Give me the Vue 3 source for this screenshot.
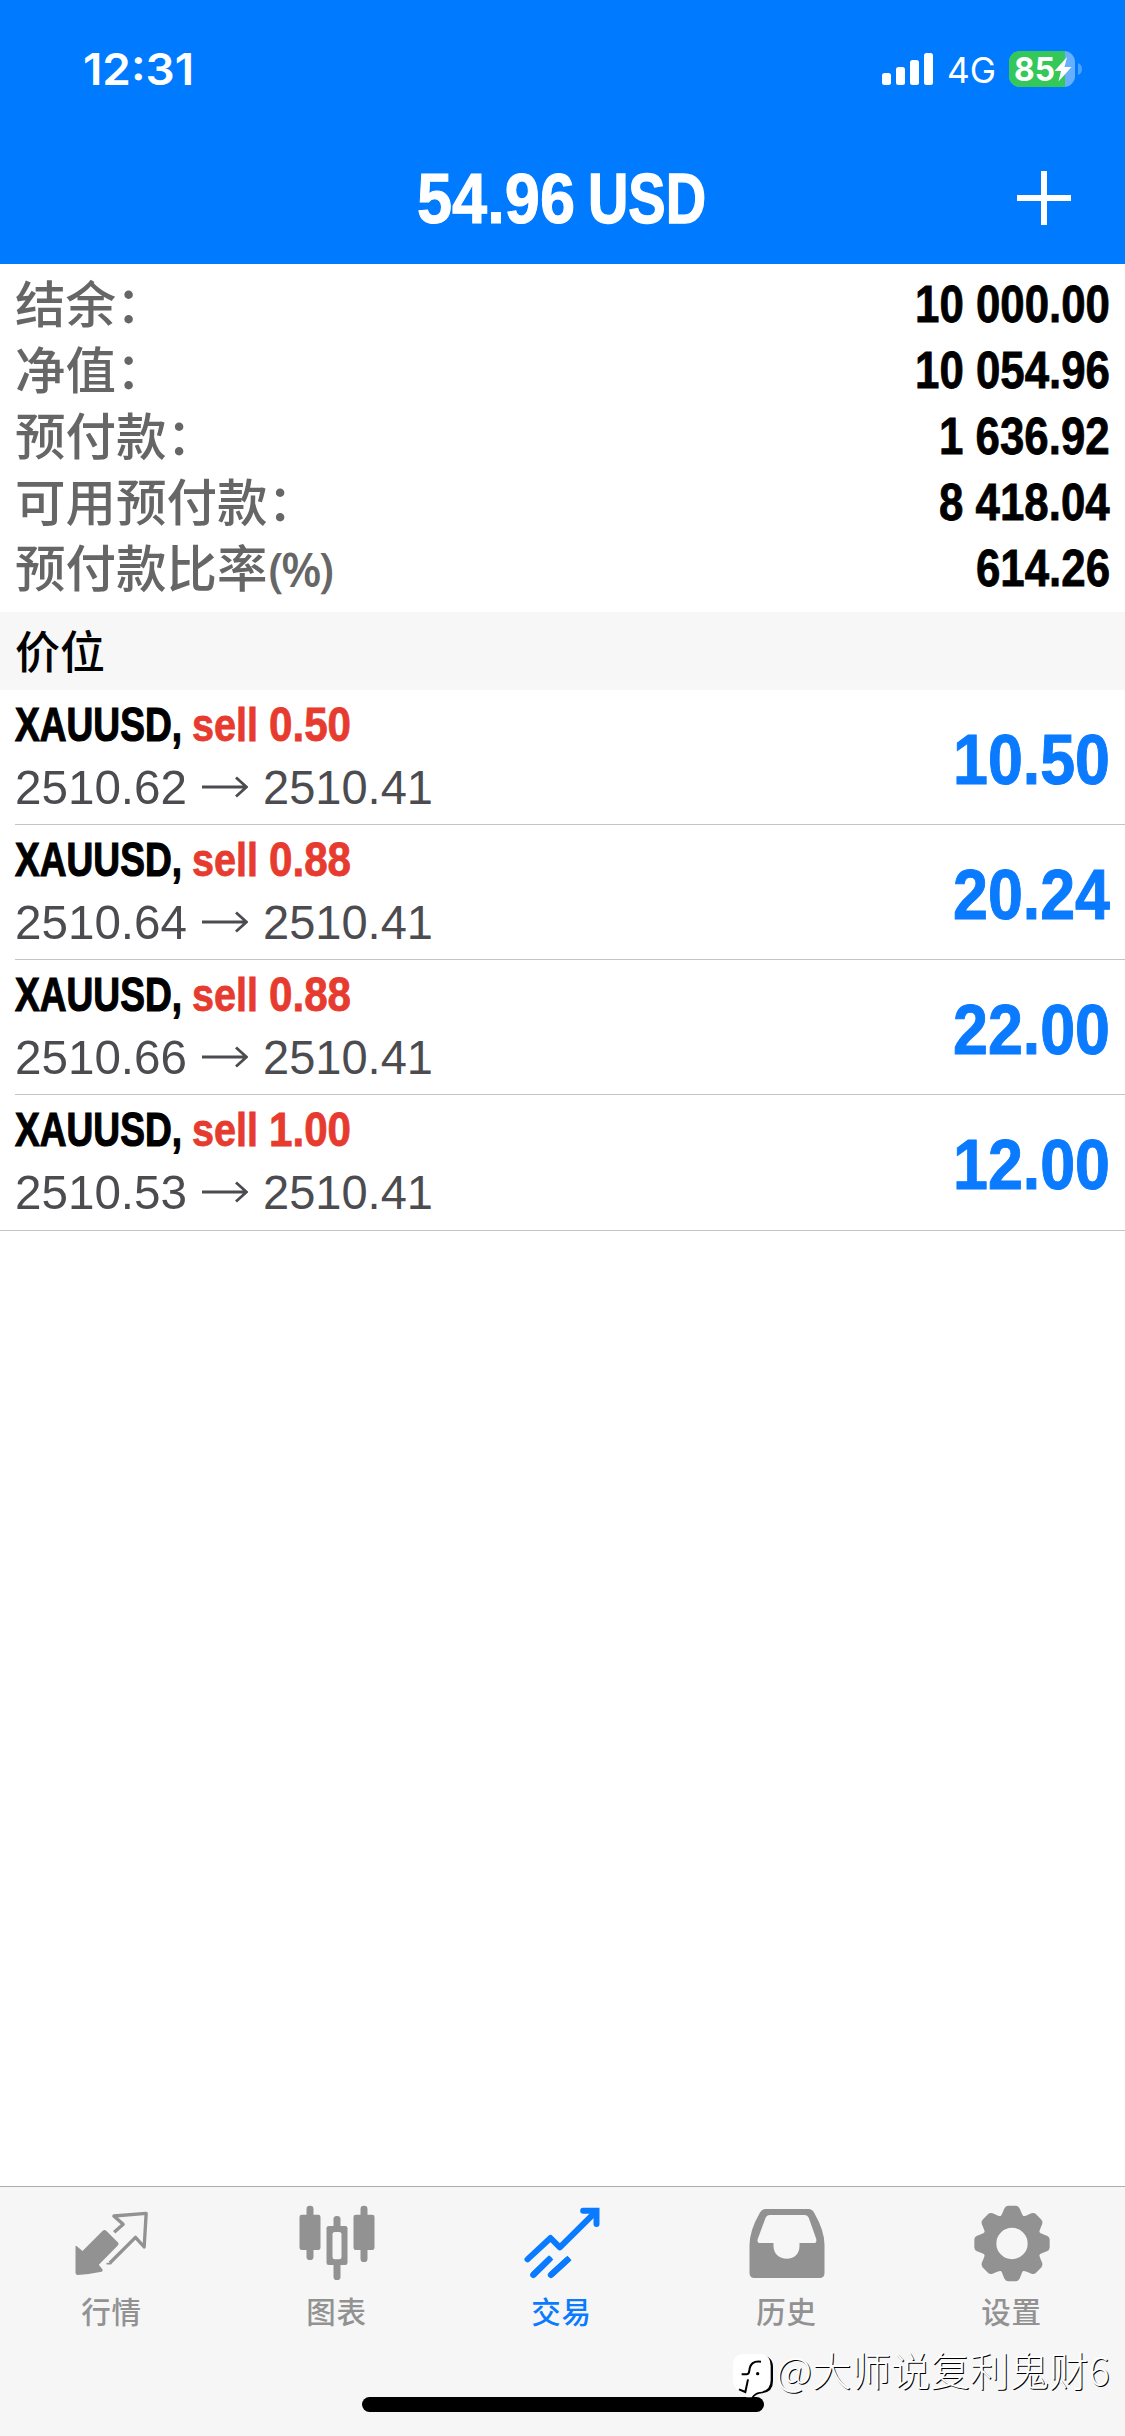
<script setup>
import { h } from 'vue'

// Single line of text set to an exact advance width, for condensed lettering.
const FitText = ({ text, w, size, height, base, family, weight = 700, bold = 0 }) =>
  h('svg', { width: w, height, style: { display: 'block', overflow: 'visible', flex: 'none' } }, [
    h('text', {
      x: 0, y: base, textLength: w, lengthAdjust: 'spacingAndGlyphs', fill: 'currentColor',
      stroke: 'currentColor', 'stroke-width': bold,
      'font-size': size, 'font-weight': weight,
      'font-family': family || '"Liberation Sans", Arial, sans-serif',
      style: { whiteSpace: 'pre' }
    }, text)
  ])
FitText.props = ['text', 'w', 'size', 'height', 'base', 'family', 'weight', 'bold']

const inter = 'Inter, sans-serif'

const summary = [
  { label: '结余：', value: '10 000.00', w: 195 },
  { label: '净值：', value: '10 054.96', w: 195 },
  { label: '预付款：', value: '1 636.92', w: 170.7 },
  { label: '可用预付款：', value: '8 418.04', w: 170.7 },
  { label: '预付款比率', unit: '(%)', value: '614.26', w: 134 }
]

const positions = [
  { volume: '0.50', open: '2510.62', now: '2510.41', profit: '10.50' },
  { volume: '0.88', open: '2510.64', now: '2510.41', profit: '20.24' },
  { volume: '0.88', open: '2510.66', now: '2510.41', profit: '22.00' },
  { volume: '1.00', open: '2510.53', now: '2510.41', profit: '12.00' }
]
</script>

<template>
  <div class="screen">
    <header class="header">
      <div class="status">
        <FitText class="time" text="12:31" :w="111" :size="44" :height="44" :base="38" :family="inter" :weight="600" />
        <div class="status-right">
          <svg class="bars" width="51" height="32" viewBox="0 0 51 32" fill="#fff">
            <rect x="0" y="20" width="9" height="12" rx="2.5" />
            <rect x="14" y="14" width="9" height="18" rx="2.5" />
            <rect x="28" y="7" width="9" height="25" rx="2.5" />
            <rect x="42" y="0" width="9" height="32" rx="2.5" />
          </svg>
          <FitText class="net" text="4G" :w="49" :size="36" :height="40" :base="30" :family="inter" :weight="400" />
          <svg class="battery" width="74" height="36" viewBox="0 0 74 36">
            <rect width="66" height="36" rx="11" fill="#66b0ff" />
            <path d="M11 0H56V36H11A11 11 0 0 1 0 25V11A11 11 0 0 1 11 0Z" fill="#34c759" />
            <path d="M69 12Q73 13.500 73 18Q73 22.500 69 24Z" fill="#4da2ff" />
            <text x="5" y="30" textLength="41" lengthAdjust="spacingAndGlyphs" font-family="Inter, sans-serif" font-size="33" font-weight="700" fill="#fff">85</text>
            <path d="M58 6L45.500 20H52L49.500 30.500L62.500 16H55.500Z" fill="#fff" />
          </svg>
        </div>
      </div>
      <div class="titlebar">
        <div class="title">
          <FitText text="54.96" :w="158" :size="70" :height="80" :base="65" :bold="1" />
          <FitText text="USD" :w="118" :size="70" :height="80" :base="65" :bold="1.4" />
        </div>
        <svg class="plus" width="54" height="54" viewBox="0 0 54 54"><path d="M27 0V54M0 27H54" stroke="#fff" stroke-width="6" /></svg>
      </div>
    </header>

    <section class="summary">
      <div v-for="s in summary" :key="s.label" class="sum-row">
        <span class="label">{{ s.label }}<span v-if="s.unit" class="unit">{{ s.unit }}</span></span>
        <FitText :text="s.value" :w="s.w" :size="51" :height="66" :base="51.5" :bold="0.8" />
      </div>
    </section>

    <div class="section-title">价位</div>

    <section class="list">
      <div v-for="p in positions" :key="p.open" class="position">
        <div class="info">
          <div class="line1">
            <FitText text="XAUUSD," :w="167" :size="49" :height="60" :base="51" :bold="1.2" />
            <FitText class="sell" text="sell" :w="66" :size="47" :height="60" :base="51" :bold="0.8" />
            <FitText class="sell volume" :text="p.volume" :w="82" :size="48" :height="60" :base="51" :bold="0.8" />
          </div>
          <div class="line2">
            <FitText :text="p.open" :w="172" :size="48.5" :height="60" :base="54" :weight="400" />
            <svg class="arrow" width="46" height="22" viewBox="0 0 46 22"><path d="M0 11H44M34 1.500L44.500 11L34 20.500" fill="none" stroke="#4c4c50" stroke-width="2.800" /></svg>
            <FitText :text="p.now" :w="170" :size="48.5" :height="60" :base="54" :weight="400" />
          </div>
        </div>
        <FitText class="profit" :text="p.profit" :w="157" :size="70" :height="134" :base="94" :bold="1" />
      </div>
    </section>

    <main class="blank"></main>

    <nav class="tabs">
      <div class="tab">
        <svg viewBox="211.500 96 252 252">
          <path d="M225 229Q225 225 229 229L246 243L306 183Q312 177 318 183L351 216Q357 221 351 227L295 284L305 297Q309 303 303 305Q270 312 232 315Q225 315 225 307Z" fill="#929292" />
          <path d="M341 187L368 163L340 138L437 130L431 231L405 202L328 279" fill="none" stroke="#929292" stroke-width="10" stroke-linejoin="round" />
          <path d="M318 281H332" stroke="#929292" stroke-width="5" />
        </svg>
        <span>行情</span>
      </div>
      <div class="tab">
        <svg viewBox="886.500 96 252 252" fill="#929292">
          <rect x="897" y="134" width="63" height="106" rx="7" /><rect x="918" y="107" width="21" height="163" rx="10" />
          <rect x="1059" y="134" width="63" height="106" rx="7" /><rect x="1080" y="107" width="21" height="169" rx="10" />
          <rect x="978" y="168" width="63" height="117" rx="7" /><rect x="999" y="138" width="21" height="192" rx="10" />
          <rect x="996" y="186" width="27" height="82" rx="7" fill="#f6f6f6" />
        </svg>
        <span>图表</span>
      </div>
      <div class="tab active">
        <svg viewBox="361.500 96 252 252" fill="none" stroke="#0a7aff" stroke-width="18" stroke-linecap="round" stroke-linejoin="round">
          <path d="M381 268L450 204L478 232L585 126" />
          <path d="M548 122H588V162" stroke-linejoin="miter" />
          <path d="M398 315L452 262M451 315L507 264" stroke-linecap="butt" />
          <path d="M398 315L446 268M451 315L500 270" />
        </svg>
        <span>交易</span>
      </div>
      <div class="tab">
        <svg viewBox="136.500 96 252 252">
          <path fill-rule="evenodd" d="M196 117H324Q335 117 341 128Q372 182 372 225V309Q372 324 357 324H162Q147 324 147 309V225Q147 182 178 128Q184 117 196 117ZM208 135Q199 135 195 144L172 206Q168 219 179 219H219V228C219 252 236 266 259 266C282 266 297 252 297 228V219H340Q350 219 347 206L325 144Q321 135 312 135Z" fill="#929292" />
        </svg>
        <span>历史</span>
      </div>
      <div class="tab">
        <svg viewBox="811.500 96 252 252" fill="#929292">
          <g transform="translate(934.500 220.500)">
            <g v-for="i in 8" :key="i" :transform="`rotate(${i * 45})`">
              <path d="M-40 -76Q-30 -84 -27 -95L-23 -105Q-19 -113 -12 -113H12Q19 -113 23 -105L27 -95Q30 -84 40 -76L20 -50H-20Z" />
            </g>
            <circle r="66" fill="none" stroke="#929292" stroke-width="38" />
          </g>
        </svg>
        <span>设置</span>
      </div>
    </nav>
    <div class="home"></div>

    <div class="watermark">
      <svg width="40" height="44" viewBox="0 0 120 132">
        <path d="M36 5H84Q120 5 120 40V82Q120 114 88 118Q68 120 60 133H50L44 116Z" fill="#000" />
        <path d="M32 0H80Q113 0 113 36V78Q113 110 80 114Q64 116 56 130H40V117Q0 112 0 78V36Q0 0 32 0Z" fill="#fff" />
        <path d="M84 23Q52 18 49 50Q48 61 40 61H26M45 76L37 114L18 106" fill="none" stroke="#000" stroke-width="6" />
        <circle cx="74" cy="59" r="5" fill="#000" />
      </svg>
      <span class="mark">@大师说复利鬼财6</span>
    </div>
  </div>
</template>

<style>
body { margin: 0; background: #fff; }
</style>

<style scoped>
.screen {
  position: relative;
  width: 1125px;
  height: 2436px;
  display: flex;
  flex-direction: column;
  overflow: hidden;
  background: #fff;
  font-family: "Liberation Sans", "Noto Sans CJK SC", sans-serif;
}
.header { height: 264px; background: #007aff; color: #fff; flex: none; }
.status { height: 132px; display: flex; justify-content: space-between; padding: 0 42px 0 83px; }
.time { margin-top: 47px; }
.status-right { display: flex; align-items: flex-start; }
.bars { margin-top: 53px; }
.net { margin: 53px 13px 0 14px; }
.battery { margin-top: 51px; }
.titlebar {
  height: 132px;
  display: grid;
  grid-template-columns: 1fr auto 1fr;
  align-items: center;
  padding: 0 54px;
  box-sizing: border-box;
}
.title { grid-column: 2; display: flex; gap: 13px; padding-right: 3px; }
.plus { justify-self: end; }
.summary { height: 348px; padding: 6px 15px 0 15px; box-sizing: border-box; flex: none; }
.sum-row { display: flex; justify-content: space-between; height: 66px; line-height: 63px; color: #000; }
.label { font-family: "Noto Sans CJK SC", sans-serif; font-size: 50.5px; font-weight: 500; color: #666; white-space: nowrap; }
.unit { font-family: "Open Sans", "Noto Sans", sans-serif; font-size: 47px; font-weight: 600; letter-spacing: -2.5px; margin-left: 1px; }
.section-title {
  height: 78px;
  padding-left: 15px;
  background: #f7f7f7;
  color: #000;
  font: 500 45px/76px "Noto Sans CJK SC", sans-serif;
  flex: none;
}
.list { flex: none; border-bottom: 1px solid #c4c4c6; }
.position {
  height: 135px;
  box-sizing: border-box;
  display: flex;
  justify-content: space-between;
  margin-left: 15px;
  padding-right: 15px;
  border-bottom: 1px solid #c4c4c6;
}
.position:last-child { border-bottom: 0; }
.line1 { display: flex; color: #000; gap: 10px; }
.sell { color: #e63b2e; }
.volume { margin-left: 1px; }
.line2 { display: flex; color: #4c4c50; }
.arrow { margin: 26px 15px 0; }
.profit { color: #0a7aff; }
.blank { flex: 1; }
.tabs {
  height: 250px;
  box-sizing: border-box;
  display: grid;
  grid-template-columns: repeat(5, 225px);
  border-top: 1px solid #acacac;
  background: #f6f6f6;
  flex: none;
}
.tab { display: flex; flex-direction: column; align-items: center; padding-top: 15px; color: #929292; }
.tab svg { width: 84px; height: 84px; }
.tab span { font: 500 29.5px/40px "Noto Sans CJK SC", sans-serif; margin: 4px 2px 0 0; letter-spacing: 0.8px; }
.tab.active { color: #0a7aff; }
.home { position: absolute; left: 362px; bottom: 24px; width: 402px; height: 15px; border-radius: 8px; background: #000; }
.watermark { position: absolute; left: 733px; bottom: 38px; display: flex; align-items: flex-end; gap: 3px; }
.watermark svg { overflow: visible; }
.mark {
  font: 300 39.5px/48px "Noto Sans CJK SC", sans-serif;
  color: #fff;
  text-shadow: 1px 1px 0 #000;
  white-space: nowrap;
  padding-bottom: 5px;
}
</style>
